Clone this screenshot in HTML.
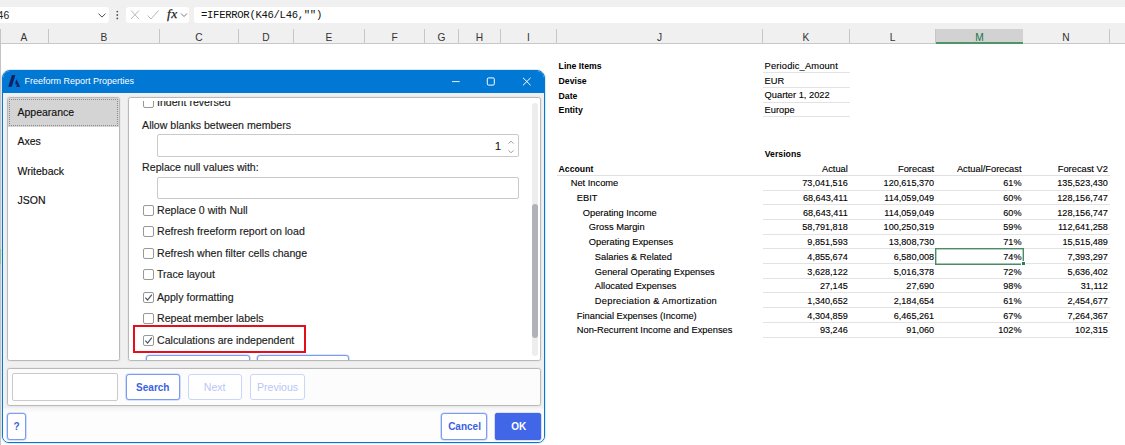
<!DOCTYPE html>
<html><head><meta charset="utf-8">
<style>
*{box-sizing:border-box;margin:0;padding:0}
html,body{width:1125px;height:445px;overflow:hidden;background:#fff;font-family:"Liberation Sans",sans-serif;}
.abs{position:absolute}
#top{position:absolute;left:0;top:0;width:1125px;height:44px;background:#f0f0f0;border-bottom:1px solid #c8c8c8}
.wb{position:absolute;background:#fff;border-radius:3px;top:7px;height:16px}
.ch{position:absolute;top:29px;height:14px;font-size:10.2px;line-height:17px;text-align:center;color:#333;border-right:1px solid #c6c6c6}
.ch.sel{background:#d2d2d2;color:#217346;border-bottom:2px solid #4e9668;height:15px}
.ss{position:absolute;font-size:9.7px;line-height:14.7px;color:#000;-webkit-text-stroke:0.12px #000;white-space:nowrap;height:14.7px}
.b{font-weight:bold;color:#000}
.ss.t{font-size:9.3px}
.ss.n{font-size:9.1px}
.ss.b{font-size:8.7px;-webkit-text-stroke:0;margin-top:0.4px}
.r{text-align:right}
.ul{border-bottom:1px solid #e4e4e4}
/* dialog */
#dlg{position:absolute;left:2px;top:70px;width:543.4px;height:373px;background:#f0f0f0;border:1px solid #0078d4;border-radius:8px 8px 7px 7px;overflow:hidden;box-shadow:0 0 0 1px rgba(160,190,220,.35)}
#tb{position:absolute;left:0;top:0;width:100%;height:21.5px;background:#0078d4;color:#fff;font-size:9px;line-height:21.5px}
.pn{position:absolute;background:#fff;border:1px solid #b9b9b9;border-radius:2.5px;box-shadow:0 0 0 1px #e9e9e9}
.li{position:absolute;left:9.5px;font-size:10.5px;color:#111;-webkit-text-stroke:0.15px #111;line-height:14px}
.lb{position:absolute;font-size:10.6px;color:#1c1c1c;-webkit-text-stroke:0.15px #1c1c1c;line-height:14px;white-space:nowrap}
.cb{position:absolute;width:11px;height:11px;border:1px solid #989898;border-radius:2px;background:#fff}
.in{position:absolute;background:#fff;border:1px solid #cacaca;border-radius:2px}
.bt{position:absolute;height:27px;border:1px solid #7b9cf0;border-radius:3px;background:#fff;color:#3b62e0;font-size:10px;font-weight:bold;text-align:center;line-height:25px}
.bt{box-shadow:0 0 0 0.6px rgba(123,156,240,.55)}
.bt.dis{box-shadow:none;border-color:#c9d6fa;color:#b7c6f6;font-weight:normal;font-size:10.6px}
.bt.pri{background:#4166e8;border-color:#4166e8;color:#fff}
</style></head><body>
<div id="top">
  <div class="wb" style="left:-4px;width:113px"></div>
  <div class="wb" style="left:126px;width:63px"></div>
  <div class="wb" style="left:194px;width:940px"></div>
  <div class="abs" style="left:-2.4px;top:9.3px;font-size:10.4px;line-height:14px;color:#222">46</div>
  <div class="abs" style="left:201px;top:8px;font-family:'Liberation Mono',monospace;font-size:10.6px;letter-spacing:-0.31px;line-height:14px;color:#111;white-space:pre">=IFERROR(K46/L46,"")</div>
  <svg class="abs" style="left:96px;top:10px" width="12" height="10" viewBox="0 0 12 10"><path d="M2.5 3.6 L6 7.1 L9.5 3.6" fill="none" stroke="#444" stroke-width="0.95"/></svg>
  <svg class="abs" style="left:115px;top:9px" width="4" height="12" viewBox="0 0 4 12"><circle cx="2.3" cy="2.6" r="0.9" fill="#555"/><circle cx="2.3" cy="6" r="0.9" fill="#555"/><circle cx="2.3" cy="9.4" r="0.9" fill="#555"/></svg>
  <svg class="abs" style="left:129px;top:9px" width="60" height="12" viewBox="0 0 60 12"><path d="M2 1.5 L10 10 M10 1.5 L2 10" stroke="#b8b8b8" stroke-width="1" fill="none"/><path d="M18.5 6.5 L22 10 L29.5 1.5" stroke="#b8b8b8" stroke-width="1" fill="none"/><path d="M52 4.5 L55 7.5 L58 4.5" stroke="#777" stroke-width="1" fill="none"/></svg>
  <div class="abs" style="left:167px;top:6px;font-family:'Liberation Serif',serif;font-style:italic;font-size:13.5px;line-height:16px;color:#222;letter-spacing:0.4px;-webkit-text-stroke:0.25px #222">fx</div>
  <div class="ch" style="left:0;width:49px">A</div>
  <div class="ch" style="left:49px;width:111px">B</div>
  <div class="ch" style="left:160px;width:79px">C</div>
  <div class="ch" style="left:239px;width:55px">D</div>
  <div class="ch" style="left:294px;width:71px">E</div>
  <div class="ch" style="left:365px;width:60px">F</div>
  <div class="ch" style="left:425px;width:34px">G</div>
  <div class="ch" style="left:459px;width:42px">H</div>
  <div class="ch" style="left:501px;width:56px">I</div>
  <div class="ch" style="left:557px;width:206px">J</div>
  <div class="ch" style="left:763px;width:87px">K</div>
  <div class="ch" style="left:850px;width:86px">L</div>
  <div class="ch sel" style="left:936px;width:87px;border-right:none">M</div>
  <div class="ch" style="left:1023px;width:87px">N</div>
</div>
<div class="abs" style="left:0;top:29px;width:1.4px;height:416px;background:#c4c4c4"></div>
<div class="abs" style="left:0;top:249px;width:1.3px;height:14.7px;background:#8fc49a"></div>
<div id="sheet">
<div class="ss b" style="top:59.00px;left:558.6px;">Line Items</div>
<div class="ss t" style="top:59.00px;left:764.6px;letter-spacing:0.17px;">Periodic_Amount</div>
<div class="abs" style="left:763.0px;top:72.28px;width:87.0px;height:1px;background:#e3e3e3"></div>
<div class="ss b" style="top:73.68px;left:558.6px;">Devise</div>
<div class="ss t" style="top:73.68px;left:764.6px;">EUR</div>
<div class="abs" style="left:763.0px;top:86.96px;width:87.0px;height:1px;background:#e3e3e3"></div>
<div class="ss b" style="top:88.36px;left:558.6px;">Date</div>
<div class="ss t" style="top:88.36px;left:764.6px;">Quarter 1, 2022</div>
<div class="abs" style="left:763.0px;top:101.64px;width:87.0px;height:1px;background:#e3e3e3"></div>
<div class="ss b" style="top:103.04px;left:558.6px;">Entity</div>
<div class="ss t" style="top:103.04px;left:764.6px;">Europe</div>
<div class="abs" style="left:763.0px;top:116.32px;width:87.0px;height:1px;background:#e3e3e3"></div>
<div class="ss b" style="top:147.08px;left:764.8px;">Versions</div>
<div class="ss b" style="top:161.76px;left:558.6px;">Account</div>
<div class="ss t" style="top:161.76px;left:727.8px;width:120px;text-align:right;">Actual</div>
<div class="ss t" style="top:161.76px;left:814.2px;width:120px;text-align:right;">Forecast</div>
<div class="ss t" style="top:161.76px;left:901.5px;width:120px;text-align:right;">Actual/Forecast</div>
<div class="ss t" style="top:161.76px;left:987.9px;width:120px;text-align:right;">Forecast V2</div>
<div class="abs" style="left:557.0px;top:175.04px;width:553.0px;height:1px;background:#e0e0e0"></div>
<div class="ss t" style="top:176.44px;left:570.7px;">Net Income</div>
<div class="ss n" style="top:176.44px;left:727.8px;width:120px;text-align:right;">73,041,516</div>
<div class="ss n" style="top:176.44px;left:814.2px;width:120px;text-align:right;">120,615,370</div>
<div class="ss n" style="top:176.44px;left:901.5px;width:120px;text-align:right;">61%</div>
<div class="ss n" style="top:176.44px;left:987.9px;width:120px;text-align:right;">135,523,430</div>
<div class="abs" style="left:763.0px;top:189.72px;width:347.0px;height:1px;background:#e3e3e3"></div>
<div class="ss t" style="top:191.12px;left:576.8px;">EBIT</div>
<div class="ss n" style="top:191.12px;left:727.8px;width:120px;text-align:right;">68,643,411</div>
<div class="ss n" style="top:191.12px;left:814.2px;width:120px;text-align:right;">114,059,049</div>
<div class="ss n" style="top:191.12px;left:901.5px;width:120px;text-align:right;">60%</div>
<div class="ss n" style="top:191.12px;left:987.9px;width:120px;text-align:right;">128,156,747</div>
<div class="abs" style="left:763.0px;top:204.40px;width:347.0px;height:1px;background:#e3e3e3"></div>
<div class="ss t" style="top:205.80px;left:582.8px;">Operating Income</div>
<div class="ss n" style="top:205.80px;left:727.8px;width:120px;text-align:right;">68,643,411</div>
<div class="ss n" style="top:205.80px;left:814.2px;width:120px;text-align:right;">114,059,049</div>
<div class="ss n" style="top:205.80px;left:901.5px;width:120px;text-align:right;">60%</div>
<div class="ss n" style="top:205.80px;left:987.9px;width:120px;text-align:right;">128,156,747</div>
<div class="abs" style="left:763.0px;top:219.08px;width:347.0px;height:1px;background:#e3e3e3"></div>
<div class="ss t" style="top:220.48px;left:588.8px;">Gross Margin</div>
<div class="ss n" style="top:220.48px;left:727.8px;width:120px;text-align:right;">58,791,818</div>
<div class="ss n" style="top:220.48px;left:814.2px;width:120px;text-align:right;">100,250,319</div>
<div class="ss n" style="top:220.48px;left:901.5px;width:120px;text-align:right;">59%</div>
<div class="ss n" style="top:220.48px;left:987.9px;width:120px;text-align:right;">112,641,258</div>
<div class="abs" style="left:763.0px;top:233.76px;width:347.0px;height:1px;background:#e3e3e3"></div>
<div class="ss t" style="top:235.16px;left:588.8px;">Operating Expenses</div>
<div class="ss n" style="top:235.16px;left:727.8px;width:120px;text-align:right;">9,851,593</div>
<div class="ss n" style="top:235.16px;left:814.2px;width:120px;text-align:right;">13,808,730</div>
<div class="ss n" style="top:235.16px;left:901.5px;width:120px;text-align:right;">71%</div>
<div class="ss n" style="top:235.16px;left:987.9px;width:120px;text-align:right;">15,515,489</div>
<div class="abs" style="left:763.0px;top:248.44px;width:347.0px;height:1px;background:#e3e3e3"></div>
<div class="ss t" style="top:249.84px;left:594.8px;">Salaries &amp; Related</div>
<div class="ss n" style="top:249.84px;left:727.8px;width:120px;text-align:right;">4,855,674</div>
<div class="ss n" style="top:249.84px;left:814.2px;width:120px;text-align:right;">6,580,008</div>
<div class="ss n" style="top:249.84px;left:901.5px;width:120px;text-align:right;">74%</div>
<div class="ss n" style="top:249.84px;left:987.9px;width:120px;text-align:right;">7,393,297</div>
<div class="abs" style="left:763.0px;top:263.12px;width:347.0px;height:1px;background:#e3e3e3"></div>
<div class="ss t" style="top:264.52px;left:594.8px;">General Operating Expenses</div>
<div class="ss n" style="top:264.52px;left:727.8px;width:120px;text-align:right;">3,628,122</div>
<div class="ss n" style="top:264.52px;left:814.2px;width:120px;text-align:right;">5,016,378</div>
<div class="ss n" style="top:264.52px;left:901.5px;width:120px;text-align:right;">72%</div>
<div class="ss n" style="top:264.52px;left:987.9px;width:120px;text-align:right;">5,636,402</div>
<div class="abs" style="left:763.0px;top:277.80px;width:347.0px;height:1px;background:#e3e3e3"></div>
<div class="ss t" style="top:279.20px;left:594.8px;">Allocated Expenses</div>
<div class="ss n" style="top:279.20px;left:727.8px;width:120px;text-align:right;">27,145</div>
<div class="ss n" style="top:279.20px;left:814.2px;width:120px;text-align:right;">27,690</div>
<div class="ss n" style="top:279.20px;left:901.5px;width:120px;text-align:right;">98%</div>
<div class="ss n" style="top:279.20px;left:987.9px;width:120px;text-align:right;">31,112</div>
<div class="abs" style="left:763.0px;top:292.48px;width:347.0px;height:1px;background:#e3e3e3"></div>
<div class="ss t" style="top:293.88px;left:594.8px;letter-spacing:0.28px;">Depreciation &amp; Amortization</div>
<div class="ss n" style="top:293.88px;left:727.8px;width:120px;text-align:right;">1,340,652</div>
<div class="ss n" style="top:293.88px;left:814.2px;width:120px;text-align:right;">2,184,654</div>
<div class="ss n" style="top:293.88px;left:901.5px;width:120px;text-align:right;">61%</div>
<div class="ss n" style="top:293.88px;left:987.9px;width:120px;text-align:right;">2,454,677</div>
<div class="abs" style="left:763.0px;top:307.16px;width:347.0px;height:1px;background:#e3e3e3"></div>
<div class="ss t" style="top:308.56px;left:576.8px;">Financial Expenses (Income)</div>
<div class="ss n" style="top:308.56px;left:727.8px;width:120px;text-align:right;">4,304,859</div>
<div class="ss n" style="top:308.56px;left:814.2px;width:120px;text-align:right;">6,465,261</div>
<div class="ss n" style="top:308.56px;left:901.5px;width:120px;text-align:right;">67%</div>
<div class="ss n" style="top:308.56px;left:987.9px;width:120px;text-align:right;">7,264,367</div>
<div class="abs" style="left:763.0px;top:321.84px;width:347.0px;height:1px;background:#e3e3e3"></div>
<div class="ss t" style="top:323.24px;left:576.8px;">Non-Recurrent Income and Expenses</div>
<div class="ss n" style="top:323.24px;left:727.8px;width:120px;text-align:right;">93,246</div>
<div class="ss n" style="top:323.24px;left:814.2px;width:120px;text-align:right;">91,060</div>
<div class="ss n" style="top:323.24px;left:901.5px;width:120px;text-align:right;">102%</div>
<div class="ss n" style="top:323.24px;left:987.9px;width:120px;text-align:right;">102,315</div>
<div class="abs" style="left:763.0px;top:336.52px;width:347.0px;height:1px;background:#e3e3e3"></div>
<div class="abs" style="left:935px;top:248.24px;width:89px;height:16.4px;border:1px solid #4b8c66;box-shadow:inset 0 0 0 0.5px #6aa283"></div>
<div class="abs" style="left:1021.2px;top:261.22px;width:4.4px;height:4.4px;background:#2e7d4f;border:0.7px solid #fff"></div>
</div><!--/sheet-->

<div id="dlg">
  <div id="tb"><span class="abs" style="left:21.5px;top:0.2px">Freeform Report Properties</span>
    <svg class="abs" style="left:3px;top:2px" width="17" height="16" viewBox="0 0 17 16"><path d="M5.9 2.1 L9.4 2.1 L5.8 13.7 L2.3 13.7 Z" fill="#121f63"/><path d="M10.4 6.2 L14.2 13.7 L10.0 13.7 L11.3 11.4 L9.4 11.4 L9.4 8.9 Z" fill="#121f63"/></svg>
    <svg class="abs" style="left:447px;top:4.8px" width="84" height="12" viewBox="0 0 84 12"><path d="M2 5.6 H9.7" stroke="#fff" stroke-width="0.9" fill="none"/><rect x="37.3" y="1.9" width="7" height="7.2" rx="1.2" fill="none" stroke="#fff" stroke-width="1"/><path d="M73 1.8 L80.6 9.3 M80.6 1.8 L73 9.3" stroke="#fff" stroke-width="1" fill="none"/></svg>
  </div>
  <div class="abs" style="left:0;top:337px;width:544px;height:36px;background:linear-gradient(#f4f4f4,#fdfdfd 5px)"></div>
  <div class="pn" style="left:4px;top:26px;width:113.3px;height:263.6px">
    <div class="abs" style="left:0;top:0;width:111.3px;height:28.5px;background:#d4d4d4"><div class="abs" style="left:1px;top:1px;right:1px;bottom:1px;border:1px dotted #8a8a8a"></div></div>
    <div class="li" style="top:6.5px">Appearance</div>
    <div class="li" style="top:36px">Axes</div>
    <div class="li" style="top:65.5px">Writeback</div>
    <div class="li" style="top:95px">JSON</div>
  </div>
  <div class="pn" style="left:124.5px;top:26px;width:413.6px;height:263.6px;overflow:hidden"><div class="abs" style="left:1px;top:0;right:0;bottom:0">
<div class="cb" style="left:13.5px;top:-1.2px"></div>
<div class="lb" style="left:27.5px;top:-3.2px">Indent reversed</div>
<div class="lb" style="left:12.6px;top:19.8px">Allow blanks between members</div>
<div class="in" style="left:27.6px;top:35.7px;width:361.6px;height:23.4px"><span class="abs" style="right:16.5px;top:4.2px;font-size:11.5px;line-height:14px;color:#111">1</span><svg class="abs" style="right:2.6px;top:4px" width="8" height="16" viewBox="0 0 8 16"><path d="M1.6 4.6 L4 2.2 L6.4 4.6 M1.6 11.4 L4 13.8 L6.4 11.4" fill="none" stroke="#9a9a9a" stroke-width="1"/></svg></div>
<div class="lb" style="left:12.6px;top:62.3px">Replace null values with:</div>
<div class="in" style="left:27.6px;top:79.3px;width:361.6px;height:21.5px"></div>
<div class="cb" style="left:13.5px;top:106.5px"></div>
<div class="lb" style="left:27.5px;top:104.8px">Replace 0 with Null</div>
<div class="cb" style="left:13.5px;top:128.0px"></div>
<div class="lb" style="left:27.5px;top:126.3px">Refresh freeform report on load</div>
<div class="cb" style="left:13.5px;top:149.7px"></div>
<div class="lb" style="left:27.5px;top:148.0px">Refresh when filter cells change</div>
<div class="cb" style="left:13.5px;top:171.0px"></div>
<div class="lb" style="left:27.5px;top:169.3px">Trace layout</div>
<div class="cb" style="left:13.5px;top:193.5px"><svg width="11" height="11" viewBox="0 0 11 11" style="position:absolute;left:-1px;top:-1px"><path d="M2.3 5.6 L4.6 8 L8.8 2.6" fill="none" stroke="#4a5560" stroke-width="1.2"/></svg></div>
<div class="lb" style="left:27.5px;top:191.8px">Apply formatting</div>
<div class="cb" style="left:13.5px;top:215.0px"></div>
<div class="lb" style="left:27.5px;top:213.3px">Repeat member labels</div>
<div class="cb" style="left:13.5px;top:236.8px"><svg width="11" height="11" viewBox="0 0 11 11" style="position:absolute;left:-1px;top:-1px"><path d="M2.3 5.6 L4.6 8 L8.8 2.6" fill="none" stroke="#4a5560" stroke-width="1.2"/></svg></div>
<div class="lb" style="left:27.5px;top:235.1px">Calculations are independent</div>
<div class="abs" style="left:3.5px;top:226.7px;width:173.4px;height:28.4px;border:2.3px solid #e50f1b"></div>
<div class="bt" style="left:16px;top:257.3px;width:104px"></div>
<div class="bt" style="left:127.5px;top:257.3px;width:92px"></div>
<div class="abs" style="left:0;top:0;width:400px;height:2.6px;background:#fff"></div>
<div class="abs" style="left:402px;top:4.8px;width:6px;height:253.6px;background:#ededed;border-radius:3px"></div>
<div class="abs" style="left:402.2px;top:106.4px;width:6px;height:133.6px;background:#b1b1b9;border-radius:3px"></div>
  </div></div>
  <div class="pn" style="left:4px;top:297px;width:534.2px;height:37.5px;background:#fcfcfc"></div>
  <div class="in" style="left:9px;top:302.3px;width:106.3px;height:27.3px"></div>
  <div class="bt" style="left:122.7px;top:302.7px;width:54.2px;height:26.8px">Search</div>
  <div class="bt dis" style="left:184.6px;top:302.7px;width:54.2px;height:26.8px">Next</div>
  <div class="bt dis" style="left:247.4px;top:302.7px;width:54.3px;height:26.8px">Previous</div>
  <div class="bt" style="left:4px;top:341.5px;width:19px">?</div>
  <div class="bt" style="left:437.7px;top:341.5px;width:46.2px;padding-left:1.5px">Cancel</div>
  <div class="bt pri" style="left:492px;top:341.5px;width:46.2px;border-radius:2px;padding-left:1.5px">OK</div>
</div>
</body></html>
